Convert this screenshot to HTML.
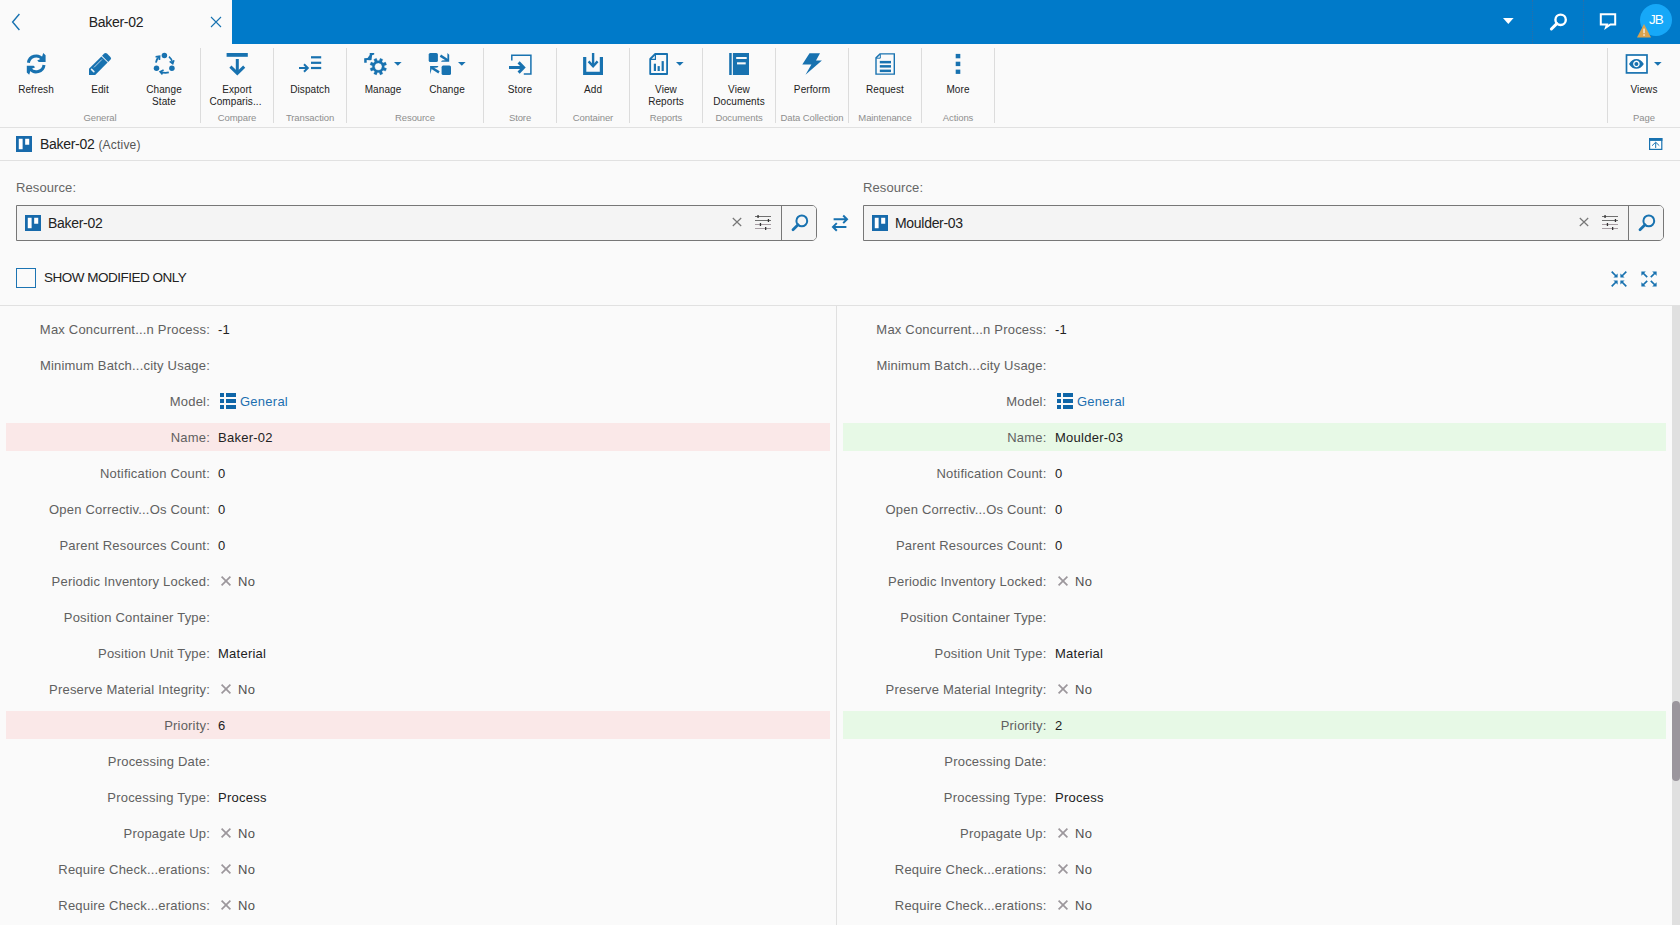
<!DOCTYPE html>
<html lang="en">
<head>
<meta charset="utf-8">
<title>Baker-02</title>
<style>
*{box-sizing:border-box;margin:0;padding:0}
html,body{width:1680px;height:925px;overflow:hidden;background:#fafafa;font-family:"Liberation Sans","DejaVu Sans",sans-serif;color:#222}
#top{position:absolute;left:0;top:0;width:1680px;height:44px;background:#007ac9}
#tab{position:absolute;left:0;top:0;width:232px;height:44px;background:#fafafa}
#tab .t{position:absolute;left:0;width:232px;top:14px;text-align:center;font-size:14px;letter-spacing:-0.3px;color:#222}
#tab svg,#top svg{position:absolute;overflow:visible}
.dot{position:absolute;top:0;width:0;height:44px;border-left:1px dotted #2a6fa8}
#av{position:absolute;left:1640px;top:4px;width:32px;height:32px;border-radius:16px;background:#16a8f8;color:#fff;font-size:13.5px;line-height:32px;text-align:center;letter-spacing:-0.8px}
#ribbon{position:absolute;left:0;top:44px;width:1680px;height:84px;background:#fafafa;border-bottom:1px solid #e1e1e1}
.gs{position:absolute;top:4px;width:1px;height:75px;background:#dcdcdc}
.gl{position:absolute;top:67.5px;width:120px;margin-left:-60px;text-align:center;font-size:9.5px;line-height:12px;color:#8e8e8e;white-space:nowrap;letter-spacing:-0.1px}
.bl{position:absolute;top:40px;width:90px;margin-left:-45px;font-size:10px;line-height:12px;color:#222;text-align:center;letter-spacing:0.1px}
.ic{position:absolute;top:8px;width:24px;height:24px;overflow:visible}
.car{position:absolute;top:18.4px;margin-left:0.3px;width:8px;height:4px;overflow:visible}
#titlebar{position:absolute;left:0;top:128px;width:1680px;height:33px;border-bottom:1px solid #e1e1e1}
#titlebar svg{position:absolute;overflow:visible}
#titlebar .pt{position:absolute;left:40px;top:8px;font-size:14px;letter-spacing:-0.3px;color:#222;white-space:nowrap}
#titlebar .pt span{font-size:12px;color:#555;margin-left:4px;letter-spacing:0.2px}
.flabel{position:absolute;top:180px;font-size:13px;line-height:15px;color:#666;letter-spacing:0.1px}
.finput{position:absolute;top:205px;height:36px;border:1px solid #777;background:#f4f4f4;border-radius:0 5px 5px 0}
.finput .sb{position:absolute;right:0;top:0;width:35px;height:34px;border-left:1px solid #777;background:#f5f5f5;border-radius:0 4px 4px 0}
.finput .ft{position:absolute;left:31px;top:9px;font-size:14px;line-height:16px;letter-spacing:-0.3px;color:#222;white-space:nowrap}
.finput svg{position:absolute;overflow:visible}
#chk{position:absolute;left:16px;top:268px;width:20px;height:20px;border:1px solid #1c74b3;background:#fafafa}
#chkl{position:absolute;left:44px;top:270px;font-size:13.5px;line-height:16px;letter-spacing:-0.5px;color:#222;white-space:nowrap}
#sep{position:absolute;left:0;top:305px;width:1680px;height:1px;background:#e1e1e1}
#vdiv{position:absolute;left:836px;top:306px;width:1px;height:619px;background:#e0e0e0}
#sbt{position:absolute;left:1672px;top:306px;width:8px;height:619px;background:#e0e0e0}
#sbh{position:absolute;left:1672px;top:701px;width:8px;height:80px;background:#9b969d;border-radius:4px}
.panel{position:absolute;top:306px;height:619px;overflow:hidden}
.row{position:absolute;left:6px;height:28px;font-size:13px;line-height:28px;white-space:nowrap}
.row.r{background:#fae8e8}
.row.g{background:#e7f9e6}
.row .l{position:absolute;top:0.5px;color:#606060;letter-spacing:0.2px;text-align:right}
.row .v{position:absolute;top:0.5px;color:#222;letter-spacing:0.25px}
.row .v.lnk{color:#1c6fb0}
.row .v.no{color:#505050}
.row svg{position:absolute;overflow:visible}
.exp{position:absolute;overflow:visible}
</style>
</head>
<body>

<div id="top">
<svg style="left:1503px;top:18px" width="11" height="6" viewBox="0 0 11 6"><path fill="#fff" d="M0 0H10.6L5.3 6z"/></svg>
<div class="dot" style="left:1532px"></div>
<div class="dot" style="left:1583px"></div>
<svg style="left:1548px;top:10px" width="22" height="22" viewBox="0 0 22 22"><circle cx="12.6" cy="9.8" r="5.2" fill="none" stroke="#fff" stroke-width="2.4"/><path d="M8.8 13.6L3.4 19" stroke="#fff" stroke-width="3" stroke-linecap="round"/></svg>
<svg style="left:1598px;top:11px" width="22" height="20" viewBox="0 0 22 20"><path fill="none" stroke="#fff" stroke-width="2" stroke-linejoin="miter" d="M2.8 3.2H17.2V13.4H12.4L8 16.4L9 13.4H2.8z"/></svg>
<div id="av">JB</div>
<svg style="left:1637px;top:24px" width="14" height="14" viewBox="0 0 14 14"><path fill="#d9a34f" d="M7 0L14 13.4H0z"/><rect x="6.3" y="4.6" width="1.5" height="4.6" fill="#f3ead8"/><rect x="6.3" y="10.2" width="1.5" height="1.6" fill="#f3ead8"/></svg>
</div>
<div id="tab">
<svg style="left:11px;top:13px" width="10" height="18" viewBox="0 0 10 18"><path fill="none" stroke="#1872b0" stroke-width="1.4" d="M8.4 1L1.6 9L8.4 17"/></svg>
<div class="t">Baker-02</div>
<svg style="left:210px;top:16px" width="12" height="12" viewBox="0 0 12 12"><path fill="none" stroke="#1872b0" stroke-width="1.1" d="M1 1L11 11M11 1L1 11"/></svg>
</div>

<div id="ribbon">
<svg class="ic" style="left:24px;" width="24" height="24" viewBox="0 0 24 24"><g fill="none" stroke="#1872b0" stroke-width="3"><path d="M4.4 10.8A7.8 7.8 0 0 1 18.3 7"/><path d="M20 13A7.8 7.8 0 0 1 6.1 16.8"/></g><path fill="#1872b0" d="M19.2 1L21.6 3.2V10H14.8L13.2 8.4L17.5 6.5z"/><path fill="#1872b0" d="M5.2 22.7L2.8 20.5V13.7H9.6L11.2 15.3L6.9 17.2z"/></svg>
<div class="bl" style="left:36px">Refresh</div>
<svg class="ic" style="left:88px;" width="24" height="24" viewBox="0 0 24 24"><g transform="translate(10.85 13.15) rotate(45)" fill="#1872b0"><path d="M-4.4 -8.9V-11.9Q-4.4 -13.95 -2.4 -13.95H2.4Q4.4 -13.95 4.4 -11.9V-8.9z"/><path d="M-4.4 -8H4.4V9.55L0 13.95L-4.4 9.55z"/><path d="M-1.84 -6.2V5" stroke="#d5e3ef" stroke-width="0.8"/><path d="M-2.2 8.1H1" stroke="#fff" stroke-width="1.6" stroke-linecap="round" opacity="0.9"/></g></svg>
<div class="bl" style="left:100px">Edit</div>
<svg class="ic" style="left:152px;" width="24" height="24" viewBox="0 0 24 24"><g fill="#1872b0"><circle cx="12.4" cy="3.6" r="2.75"/><circle cx="4.5" cy="16.3" r="2.75"/><circle cx="19.9" cy="16.3" r="2.75"/></g><g fill="none" stroke="#1872b0" stroke-width="1.7" stroke-linejoin="miter"><path d="M3.9 10.6Q4.6 6.6 7.3 4.4"/><path d="M3.6 4.9L7.6 4.2L7.4 8"/><path d="M17 4.6Q20 7 20.6 11.2"/><path d="M21.9 8.2L20.7 11.6L17.7 9.4"/><path d="M16.8 20.4Q12.6 21.4 8.6 19.9"/><path d="M11.6 18.1L8.2 19.8L10.5 22.4"/></g></svg>
<div class="bl" style="left:164px">Change<br>State</div>
<div class="gl" style="left:100px">General</div>
<div class="gs" style="left:200px"></div>
<svg class="ic" style="left:225px;" width="24" height="24" viewBox="0 0 24 24"><rect x="1.6" y="1" width="21.2" height="3.8" fill="#1872b0"/><g fill="none" stroke="#1872b0" stroke-width="3"><path d="M12.3 7V21"/><path d="M5.4 14.6L12.3 21.4L19.2 14.6"/></g></svg>
<div class="bl" style="left:237px">Export<br><span style="position:relative;left:-1.5px">Comparis...</span></div>
<div class="gl" style="left:237px">Compare</div>
<div class="gs" style="left:273px"></div>
<svg class="ic" style="left:298px;" width="24" height="24" viewBox="0 0 24 24"><g fill="#1872b0"><rect x="13" y="4.2" width="10.2" height="2.2"/><rect x="13" y="9.7" width="10.2" height="2.2"/><rect x="13" y="14.9" width="10.2" height="2.2"/></g><g fill="none" stroke="#1872b0" stroke-width="2"><path d="M1 16H9.6"/><path d="M6 12.2L9.8 16L6 19.8"/></g></svg>
<div class="bl" style="left:310px">Dispatch</div>
<div class="gl" style="left:310px">Transaction</div>
<div class="gs" style="left:346px"></div>
<svg class="ic" style="left:364px;" width="24" height="24" viewBox="0 0 24 24"><path fill="#1872b0" fill-rule="evenodd" stroke="#1872b0" stroke-width="0.3" stroke-linejoin="round" d="M15.19 8.67L16.22 6.32L18.80 7.39L17.86 9.77L19.13 11.04L21.51 10.10L22.58 12.68L20.23 13.71L20.23 15.49L22.58 16.52L21.51 19.10L19.13 18.16L17.86 19.43L18.80 21.81L16.22 22.88L15.19 20.53L13.41 20.53L12.38 22.88L9.80 21.81L10.74 19.43L9.47 18.16L7.09 19.10L6.02 16.52L8.37 15.49L8.37 13.71L6.02 12.68L7.09 10.10L9.47 11.04L10.74 9.77L9.80 7.39L12.38 6.32L13.41 8.67zM14.3 10.9a3.7 3.7 0 1 0 0.01 0z"/><path fill="#1872b0" d="M5.7 1H10.2V2.6L8.1 3.2L7.5 8L6 8.3L2.7 8V10.7H0.2V6.2L3.6 5.9L5.7 2.9z"/></svg>
<svg class="car" style="left:393.3px;" width="8" height="4" viewBox="0 0 8 4"><path fill="#1872b0" d="M0 0H7.6L3.8 3.8z"/></svg>
<div class="bl" style="left:383px">Manage</div>
<svg class="ic" style="left:428px;" width="24" height="24" viewBox="0 0 24 24"><g fill="#1872b0"><rect x="0.7" y="0.9" width="9.2" height="9.1" rx="1.6"/><rect x="13.6" y="13.6" width="9.4" height="9.4" rx="1.6"/><path d="M19.4 1L21.2 2.8V9.8H13L14 8.4L19.4 8z"/><path d="M2.1 22.2V14.1H10.5L9.4 15.6L4 16z"/></g><g fill="none" stroke="#1872b0" stroke-width="2.5"><path d="M12.4 3.6L19.6 8.2"/><path d="M11 20.4L3.8 15.8"/></g></svg>
<svg class="car" style="left:457.4px;" width="8" height="4" viewBox="0 0 8 4"><path fill="#1872b0" d="M0 0H7.6L3.8 3.8z"/></svg>
<div class="bl" style="left:447px">Change</div>
<div class="gl" style="left:415px">Resource</div>
<div class="gs" style="left:483px"></div>
<svg class="ic" style="left:508px;" width="24" height="24" viewBox="0 0 24 24"><path fill="none" stroke="#1872b0" stroke-width="1.5" d="M3.8 8.4V3.2H22.9V21.9H15.8"/><g fill="none" stroke="#1872b0" stroke-width="3"><path d="M1 15.5H15"/><path d="M10.6 10.4L15.6 15.5L10.6 20.6"/></g></svg>
<div class="bl" style="left:520px">Store</div>
<div class="gl" style="left:520px">Store</div>
<div class="gs" style="left:556px"></div>
<svg class="ic" style="left:581px;" width="24" height="24" viewBox="0 0 24 24"><path fill="none" stroke="#1872b0" stroke-width="3.2" d="M3.7 5V21.3H20.4V5"/><g fill="none" stroke="#1872b0" stroke-width="2.4"><path d="M12.1 1V14"/><path d="M7.6 9.4L12.1 14.2L16.6 9.4"/></g></svg>
<div class="bl" style="left:593px">Add</div>
<div class="gl" style="left:593px">Container</div>
<div class="gs" style="left:629px"></div>
<svg class="ic" style="left:647px;" width="24" height="24" viewBox="0 0 24 24"><path fill="none" stroke="#1872b0" stroke-width="1.8" stroke-linejoin="round" d="M8.2 2H20.1V22H3.2V7z"/><path fill="none" stroke="#1872b0" stroke-width="1.2" d="M3.6 7.4H8.4V2.6"/><g fill="#1872b0"><rect x="6.8" y="11.7" width="2.2" height="7.3"/><rect x="10.6" y="14.1" width="2.2" height="4.9"/><rect x="14.6" y="9.1" width="2.2" height="9.9"/></g></svg>
<svg class="car" style="left:676.2px;" width="8" height="4" viewBox="0 0 8 4"><path fill="#1872b0" d="M0 0H7.6L3.8 3.8z"/></svg>
<div class="bl" style="left:666px">View<br>Reports</div>
<div class="gl" style="left:666px">Reports</div>
<div class="gs" style="left:702px"></div>
<svg class="ic" style="left:727px;" width="24" height="24" viewBox="0 0 24 24"><g fill="#1872b0"><rect x="2.2" y="1" width="2.5" height="22"/><rect x="5.9" y="1" width="16.1" height="22"/></g><g fill="#fafafa"><rect x="9.2" y="5" width="10.5" height="2"/><rect x="10" y="10.3" width="8.7" height="2.1"/></g></svg>
<div class="bl" style="left:739px">View<br>Documents</div>
<div class="gl" style="left:739px">Documents</div>
<div class="gs" style="left:775px"></div>
<svg class="ic" style="left:800px;" width="24" height="24" viewBox="0 0 24 24"><path fill="#1872b0" d="M9.5 1.2H20L16 8.4H21.9L5.5 22.8L11.4 12.4H2.3z"/></svg>
<div class="bl" style="left:812px">Perform</div>
<div class="gl" style="left:812px">Data Collection</div>
<div class="gs" style="left:848px"></div>
<svg class="ic" style="left:873px;" width="24" height="24" viewBox="0 0 24 24"><path fill="none" stroke="#1872b0" stroke-width="1.4" d="M7 1.9H21.3V22.1H3V5.9z"/><path fill="none" stroke="#1872b0" stroke-width="1" d="M3.3 6.2H7.3V2.2"/><g fill="#1872b0"><rect x="6.8" y="8.9" width="11.2" height="2.5"/><rect x="6.8" y="13.1" width="11.2" height="2.5"/><rect x="6.8" y="17.6" width="11.2" height="2.5"/></g></svg>
<div class="bl" style="left:885px">Request</div>
<div class="gl" style="left:885px">Maintenance</div>
<div class="gs" style="left:921px"></div>
<svg class="ic" style="left:946px;" width="24" height="24" viewBox="0 0 24 24"><g fill="#1872b0"><rect x="9.7" y="1.9" width="4.6" height="4.4"/><rect x="9.7" y="9.7" width="4.6" height="4.4"/><rect x="9.7" y="17.6" width="4.6" height="4.3"/></g></svg>
<div class="bl" style="left:958px">More</div>
<div class="gl" style="left:958px">Actions</div>
<div class="gs" style="left:994px"></div>
<div class="gs" style="left:1607px"></div>
<svg class="ic" style="left:1624.4px;" width="24" height="24" viewBox="0 0 24 24"><rect x="2.5" y="3" width="20.5" height="17.9" fill="#fff" stroke="#1872b0" stroke-width="1.7"/><path fill="#1872b0" fill-rule="evenodd" d="M5 11.9Q8 7 12.4 7Q16.8 7 19.8 11.9Q16.8 16.8 12.4 16.8Q8 16.8 5 11.9zM12.4 8.6a3.3 3.3 0 1 0 0.01 0z"/><circle cx="12.4" cy="11.9" r="2" fill="#1872b0"/></svg>
<svg class="car" style="left:1654.0px;" width="8" height="4" viewBox="0 0 8 4"><path fill="#1872b0" d="M0 0H7.6L3.8 3.8z"/></svg>
<div class="bl" style="left:1644px">Views</div>
<div class="gl" style="left:1644px">Page</div>
</div>

<div id="titlebar">
<svg style="left:16px;top:8px" width="16" height="16" viewBox="0 0 15 15"><rect width="15" height="15" fill="#176aab"/><rect x="2.6" y="2.6" width="3.6" height="9.8" fill="#fff"/><rect x="8.6" y="2.6" width="3.8" height="5.6" fill="#fff"/></svg>
<div class="pt">Baker-02<span>(Active)</span></div>
<svg style="left:1649.4px;top:10px" width="13.4" height="12" viewBox="0 0 13.4 12"><rect x="0.6" y="0.6" width="12.2" height="10.8" fill="#fff" stroke="#1872b0" stroke-width="1.2"/><rect x="0" y="0" width="13.4" height="2.9" fill="#1872b0"/><path fill="none" stroke="#1872b0" stroke-width="1" d="M6.7 10V4.4M3.1 7.7L6.7 4.2L10.3 7.7"/></svg>
</div>


<div class="flabel" style="left:16px">Resource:</div>
<div class="flabel" style="left:863px">Resource:</div>
<div class="finput" style="left:16px;width:801px"><svg style="left:8px;top:9px" width="16" height="16" viewBox="0 0 15 15"><rect width="15" height="15" fill="#176aab"/><rect x="2.6" y="2.6" width="3.6" height="9.8" fill="#fff"/><rect x="8.6" y="2.6" width="3.8" height="5.6" fill="#fff"/></svg><div class="ft">Baker-02</div><svg style="left:714.5px;top:11.4px" width="10" height="10" viewBox="0 0 10 10"><path fill="none" stroke="#777" stroke-width="1.2" d="M0.8 1L9.2 9M9.2 1L0.8 9"/></svg><svg style="left:738px;top:8px" width="16" height="18" viewBox="0 0 16 18"><g stroke-width="1" fill="none"><path stroke="#707070" d="M0 2.5H16M0 6.5H16"/><path stroke="#a89ea4" d="M0 10.5H16M0 14.5H16"/></g><g fill="#333"><rect x="2.4" y="1" width="1.3" height="3"/><rect x="12.8" y="5" width="1.3" height="3"/><rect x="4.8" y="9" width="1.3" height="3"/><rect x="10" y="13" width="1.3" height="3"/></g></svg><div class="sb"></div><svg style="left:772.9px;top:7px" width="20" height="20" viewBox="0 0 20 20"><circle cx="11.8" cy="7.9" r="5.4" fill="none" stroke="#1872b0" stroke-width="2"/><path d="M8 11.8L3 16.8" stroke="#1872b0" stroke-width="2.8" stroke-linecap="round"/></svg></div>
<div class="finput" style="left:863px;width:801px"><svg style="left:8px;top:9px" width="16" height="16" viewBox="0 0 15 15"><rect width="15" height="15" fill="#176aab"/><rect x="2.6" y="2.6" width="3.6" height="9.8" fill="#fff"/><rect x="8.6" y="2.6" width="3.8" height="5.6" fill="#fff"/></svg><div class="ft">Moulder-03</div><svg style="left:714.5px;top:11.4px" width="10" height="10" viewBox="0 0 10 10"><path fill="none" stroke="#777" stroke-width="1.2" d="M0.8 1L9.2 9M9.2 1L0.8 9"/></svg><svg style="left:738px;top:8px" width="16" height="18" viewBox="0 0 16 18"><g stroke-width="1" fill="none"><path stroke="#707070" d="M0 2.5H16M0 6.5H16"/><path stroke="#a89ea4" d="M0 10.5H16M0 14.5H16"/></g><g fill="#333"><rect x="2.4" y="1" width="1.3" height="3"/><rect x="12.8" y="5" width="1.3" height="3"/><rect x="4.8" y="9" width="1.3" height="3"/><rect x="10" y="13" width="1.3" height="3"/></g></svg><div class="sb"></div><svg style="left:772.9px;top:7px" width="20" height="20" viewBox="0 0 20 20"><circle cx="11.8" cy="7.9" r="5.4" fill="none" stroke="#1872b0" stroke-width="2"/><path d="M8 11.8L3 16.8" stroke="#1872b0" stroke-width="2.8" stroke-linecap="round"/></svg></div>
<svg class="exp" style="left:830px;top:213px" width="20" height="20" viewBox="0 0 20 20"><g fill="none" stroke="#1872b0" stroke-width="2"><path d="M3.6 6.3H17M13.2 2.5L17 6.3L13.2 10.1"/><path d="M16.4 13.9H3M6.8 10.1L3 13.9L6.8 17.7"/></g></svg>
<div id="chk"></div><div id="chkl">SHOW MODIFIED ONLY</div>
<svg class="exp" style="left:1611px;top:271px" width="16" height="16" viewBox="0 0 16 16"><g fill="none" stroke="#1872b0" stroke-width="1.7"><path d="M0.7 0.7L5 5M15.3 0.7L11 5M0.7 15.3L5 11M15.3 15.3L11 11"/></g><g fill="#1872b0"><path d="M6.6 2.4V6.6H2.4z"/><path d="M9.4 2.4V6.6H13.6z"/><path d="M6.6 13.6V9.4H2.4z"/><path d="M9.4 13.6V9.4H13.6z"/></g></svg>
<svg class="exp" style="left:1641px;top:271px" width="16" height="16" viewBox="0 0 16 16"><g fill="none" stroke="#1872b0" stroke-width="1.7"><path d="M6.2 6.2L2 2M9.8 6.2L14 2M6.2 9.8L2 14M9.8 9.8L14 14"/></g><g fill="#1872b0"><path d="M0.4 0.4H4.8L0.4 4.8z"/><path d="M15.6 0.4H11.2L15.6 4.8z"/><path d="M0.4 15.6H4.8L0.4 11.2z"/><path d="M15.6 15.6H11.2L15.6 11.2z"/></g></svg>
<div id="sep"></div>

<div class="panel" style="left:0px;width:836px">
<div class="row" style="top:9px;width:824px"><div class="l" style="right:620px">Max Concurrent...n Process:</div><div class="v" style="left:212px">-1</div></div>
<div class="row" style="top:45px;width:824px"><div class="l" style="right:620px">Minimum Batch...city Usage:</div></div>
<div class="row" style="top:81px;width:824px"><div class="l" style="right:620px">Model:</div><svg style="left:214px;top:6px" width="16" height="16" viewBox="0 0 16 16"><g fill="#0f66a8"><rect x="0" y="0" width="4" height="4"/><rect x="0" y="6" width="4" height="4"/><rect x="0" y="12" width="4" height="4"/><rect x="6" y="0" width="10" height="4"/><rect x="6" y="6" width="10" height="4"/><rect x="6" y="12" width="10" height="4"/></g></svg><div class="v lnk" style="left:234px">General</div></div>
<div class="row r" style="top:117px;width:824px"><div class="l" style="right:620px">Name:</div><div class="v" style="left:212px">Baker-02</div></div>
<div class="row" style="top:153px;width:824px"><div class="l" style="right:620px">Notification Count:</div><div class="v" style="left:212px">0</div></div>
<div class="row" style="top:189px;width:824px"><div class="l" style="right:620px">Open Correctiv...Os Count:</div><div class="v" style="left:212px">0</div></div>
<div class="row" style="top:225px;width:824px"><div class="l" style="right:620px">Parent Resources Count:</div><div class="v" style="left:212px">0</div></div>
<div class="row" style="top:261px;width:824px"><div class="l" style="right:620px">Periodic Inventory Locked:</div><svg style="left:215px;top:9px" width="10" height="10" viewBox="0 0 10 10"><path fill="none" stroke="#9c979c" stroke-width="1.7" d="M0.6 0.6L9.4 9.4M9.4 0.6L0.6 9.4"/></svg><div class="v no" style="left:232px">No</div></div>
<div class="row" style="top:297px;width:824px"><div class="l" style="right:620px">Position Container Type:</div></div>
<div class="row" style="top:333px;width:824px"><div class="l" style="right:620px">Position Unit Type:</div><div class="v" style="left:212px">Material</div></div>
<div class="row" style="top:369px;width:824px"><div class="l" style="right:620px">Preserve Material Integrity:</div><svg style="left:215px;top:9px" width="10" height="10" viewBox="0 0 10 10"><path fill="none" stroke="#9c979c" stroke-width="1.7" d="M0.6 0.6L9.4 9.4M9.4 0.6L0.6 9.4"/></svg><div class="v no" style="left:232px">No</div></div>
<div class="row r" style="top:405px;width:824px"><div class="l" style="right:620px">Priority:</div><div class="v" style="left:212px">6</div></div>
<div class="row" style="top:441px;width:824px"><div class="l" style="right:620px">Processing Date:</div></div>
<div class="row" style="top:477px;width:824px"><div class="l" style="right:620px">Processing Type:</div><div class="v" style="left:212px">Process</div></div>
<div class="row" style="top:513px;width:824px"><div class="l" style="right:620px">Propagate Up:</div><svg style="left:215px;top:9px" width="10" height="10" viewBox="0 0 10 10"><path fill="none" stroke="#9c979c" stroke-width="1.7" d="M0.6 0.6L9.4 9.4M9.4 0.6L0.6 9.4"/></svg><div class="v no" style="left:232px">No</div></div>
<div class="row" style="top:549px;width:824px"><div class="l" style="right:620px">Require Check...erations:</div><svg style="left:215px;top:9px" width="10" height="10" viewBox="0 0 10 10"><path fill="none" stroke="#9c979c" stroke-width="1.7" d="M0.6 0.6L9.4 9.4M9.4 0.6L0.6 9.4"/></svg><div class="v no" style="left:232px">No</div></div>
<div class="row" style="top:585px;width:824px"><div class="l" style="right:620px">Require Check...erations:</div><svg style="left:215px;top:9px" width="10" height="10" viewBox="0 0 10 10"><path fill="none" stroke="#9c979c" stroke-width="1.7" d="M0.6 0.6L9.4 9.4M9.4 0.6L0.6 9.4"/></svg><div class="v no" style="left:232px">No</div></div>
</div>
<div class="panel" style="left:837px;width:835px">
<div class="row" style="top:9px;width:823px"><div class="l" style="right:619.5px">Max Concurrent...n Process:</div><div class="v" style="left:212px">-1</div></div>
<div class="row" style="top:45px;width:823px"><div class="l" style="right:619.5px">Minimum Batch...city Usage:</div></div>
<div class="row" style="top:81px;width:823px"><div class="l" style="right:619.5px">Model:</div><svg style="left:214px;top:6px" width="16" height="16" viewBox="0 0 16 16"><g fill="#0f66a8"><rect x="0" y="0" width="4" height="4"/><rect x="0" y="6" width="4" height="4"/><rect x="0" y="12" width="4" height="4"/><rect x="6" y="0" width="10" height="4"/><rect x="6" y="6" width="10" height="4"/><rect x="6" y="12" width="10" height="4"/></g></svg><div class="v lnk" style="left:234px">General</div></div>
<div class="row g" style="top:117px;width:823px"><div class="l" style="right:619.5px">Name:</div><div class="v" style="left:212px">Moulder-03</div></div>
<div class="row" style="top:153px;width:823px"><div class="l" style="right:619.5px">Notification Count:</div><div class="v" style="left:212px">0</div></div>
<div class="row" style="top:189px;width:823px"><div class="l" style="right:619.5px">Open Correctiv...Os Count:</div><div class="v" style="left:212px">0</div></div>
<div class="row" style="top:225px;width:823px"><div class="l" style="right:619.5px">Parent Resources Count:</div><div class="v" style="left:212px">0</div></div>
<div class="row" style="top:261px;width:823px"><div class="l" style="right:619.5px">Periodic Inventory Locked:</div><svg style="left:215px;top:9px" width="10" height="10" viewBox="0 0 10 10"><path fill="none" stroke="#9c979c" stroke-width="1.7" d="M0.6 0.6L9.4 9.4M9.4 0.6L0.6 9.4"/></svg><div class="v no" style="left:232px">No</div></div>
<div class="row" style="top:297px;width:823px"><div class="l" style="right:619.5px">Position Container Type:</div></div>
<div class="row" style="top:333px;width:823px"><div class="l" style="right:619.5px">Position Unit Type:</div><div class="v" style="left:212px">Material</div></div>
<div class="row" style="top:369px;width:823px"><div class="l" style="right:619.5px">Preserve Material Integrity:</div><svg style="left:215px;top:9px" width="10" height="10" viewBox="0 0 10 10"><path fill="none" stroke="#9c979c" stroke-width="1.7" d="M0.6 0.6L9.4 9.4M9.4 0.6L0.6 9.4"/></svg><div class="v no" style="left:232px">No</div></div>
<div class="row g" style="top:405px;width:823px"><div class="l" style="right:619.5px">Priority:</div><div class="v" style="left:212px">2</div></div>
<div class="row" style="top:441px;width:823px"><div class="l" style="right:619.5px">Processing Date:</div></div>
<div class="row" style="top:477px;width:823px"><div class="l" style="right:619.5px">Processing Type:</div><div class="v" style="left:212px">Process</div></div>
<div class="row" style="top:513px;width:823px"><div class="l" style="right:619.5px">Propagate Up:</div><svg style="left:215px;top:9px" width="10" height="10" viewBox="0 0 10 10"><path fill="none" stroke="#9c979c" stroke-width="1.7" d="M0.6 0.6L9.4 9.4M9.4 0.6L0.6 9.4"/></svg><div class="v no" style="left:232px">No</div></div>
<div class="row" style="top:549px;width:823px"><div class="l" style="right:619.5px">Require Check...erations:</div><svg style="left:215px;top:9px" width="10" height="10" viewBox="0 0 10 10"><path fill="none" stroke="#9c979c" stroke-width="1.7" d="M0.6 0.6L9.4 9.4M9.4 0.6L0.6 9.4"/></svg><div class="v no" style="left:232px">No</div></div>
<div class="row" style="top:585px;width:823px"><div class="l" style="right:619.5px">Require Check...erations:</div><svg style="left:215px;top:9px" width="10" height="10" viewBox="0 0 10 10"><path fill="none" stroke="#9c979c" stroke-width="1.7" d="M0.6 0.6L9.4 9.4M9.4 0.6L0.6 9.4"/></svg><div class="v no" style="left:232px">No</div></div>
</div>
<div id="vdiv"></div><div id="sbt"></div><div id="sbh"></div>
</body>
</html>
